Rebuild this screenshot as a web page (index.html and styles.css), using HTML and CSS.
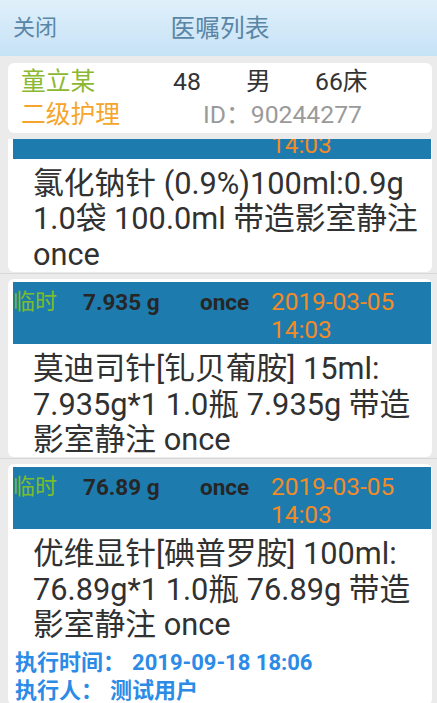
FILE: index.html
```html
<html>

<head>
  <title>医嘱列表</title>
  <link rel="stylesheet" href="styles.css">
</head>

<body>
  <div id="page">

    <div class="topbar">
      <span class="btn-close">关闭</span>
      <span class="title">医嘱列表</span>
      <span></span>
    </div>

    <div class="patient-wrap">
      <div class="patient">
        <div class="p-row">
          <span class="p-name">童立某</span>
          <span class="p-age">48</span>
          <span class="p-sex">男</span>
          <span class="p-bed">66床</span>
        </div>
        <div class="p-row">
          <span class="p-level">二级护理</span>
          <span class="p-id">ID：90244277</span>
        </div>
      </div>
    </div>

    <div class="list" id="orders" data-scroll="50">
      <div class="item">
        <div class="card">
          <div class="order-head">
            <span class="kind">临时</span>
            <span class="dose">100.0 ml</span>
            <span class="freq">once</span>
            <span class="date">2019-03-05 14:03</span>
          </div>
          <div class="order-text">氯化钠针 (0.9%)100ml:0.9g 1.0袋 100.0ml 带造影室静注 once</div>
        </div>
      </div>

      <div class="item">
        <div class="card">
          <div class="order-head">
            <span class="kind">临时</span>
            <span class="dose">7.935 g</span>
            <span class="freq">once</span>
            <span class="date">2019-03-05 14:03</span>
          </div>
          <div class="order-text">莫迪司针[钆贝葡胺] 15ml:<wbr>7.935g*1 1.0瓶 7.935g 带造影室静注 once</div>
        </div>
      </div>

      <div class="item">
        <div class="card">
          <div class="order-head">
            <span class="kind">临时</span>
            <span class="dose">76.89 g</span>
            <span class="freq">once</span>
            <span class="date">2019-03-05 14:03</span>
          </div>
          <div class="order-text">优维显针[碘普罗胺] 100ml:<wbr>76.89g*1 1.0瓶 76.89g 带造影室静注 once</div>
          <div class="exec">
            <div><span>执行时间：</span><span class="exec-val">2019-09-18 18:06</span></div>
            <div><span>执行人：</span><span class="exec-val">测试用户</span></div>
          </div>
        </div>
      </div>
    </div>

  </div>
  <script src="script.js"></script>
</body>

</html>
```

FILE: styles.css
```css
body {
  margin: 0;
  background: #ebebeb;
  font-family: Roboto, "Noto Sans CJK SC", sans-serif;
  color: #333;
}

#page {
  height: 100vh;
  display: flex;
  flex-direction: column;
  overflow: hidden;
}

.topbar {
  height: 56px;
  flex: none;
  display: grid;
  grid-template-columns: 1fr auto 1fr;
  align-items: center;
  padding: 0 13px;
  background: linear-gradient(#e0f0fb, #c6e2f6);
  color: #5a86a6;
}

.btn-close {
  font-size: 22px;
  line-height: 28px;
}

.title {
  font-size: 24.75px;
  line-height: 30px;
  padding-left: 3px;
  padding-top: 1px;
}

.patient-wrap {
  flex: none;
  padding: 7px 5px 6px 8px;
}

.patient {
  background: white;
  border-radius: 6px;
  padding: 2px 13px;
  font-size: 24.75px;
}

.p-row {
  display: flex;
  line-height: 33px;
}

.p-name {
  width: 152px;
  color: #8cb830;
}

.p-age {
  width: 73px;
}

.p-sex {
  width: 69px;
}

.p-level {
  width: 182px;
  color: #f6a52c;
}

.p-id {
  color: #9a9a9a;
}

.list {
  flex: 1;
  overflow-y: auto;
  scrollbar-width: none;
}

.item {
  padding: 5px 5px 1px 8px;
  border-bottom: 1px solid #d8d8d8;
}

.card {
  background: white;
  border-radius: 6px;
  padding: 3px 1px 0 5px;
}

.order-head {
  background: #1e7bae;
  display: grid;
  grid-template-columns: 70px 117px 71px 1fr;
  padding-top: 6px;
  height: 56px;
  line-height: 28px;
  overflow: hidden;
}

.kind {
  font-size: 22px;
  color: #7bbd2c;
}

.dose,
.freq {
  font-size: 22.5px;
  font-weight: bold;
  color: #262626;
}

.date {
  font-size: 24.4px;
  color: #f28b26;
}

.order-text {
  font-size: 30.75px;
  line-height: 35.4px;
  padding: 7px 2px 0 20px;
  color: #313131;
}

.exec {
  padding: 6px 0 0 2px;
  font-size: 22px;
  line-height: 28px;
  font-weight: bold;
  color: #2b8be6;
}

.exec-val {
  margin-left: 7px;
}
```

FILE: script.js
```js
var list = document.getElementById("orders");
list.scrollTop = parseInt(list.dataset.scroll, 10);
```
